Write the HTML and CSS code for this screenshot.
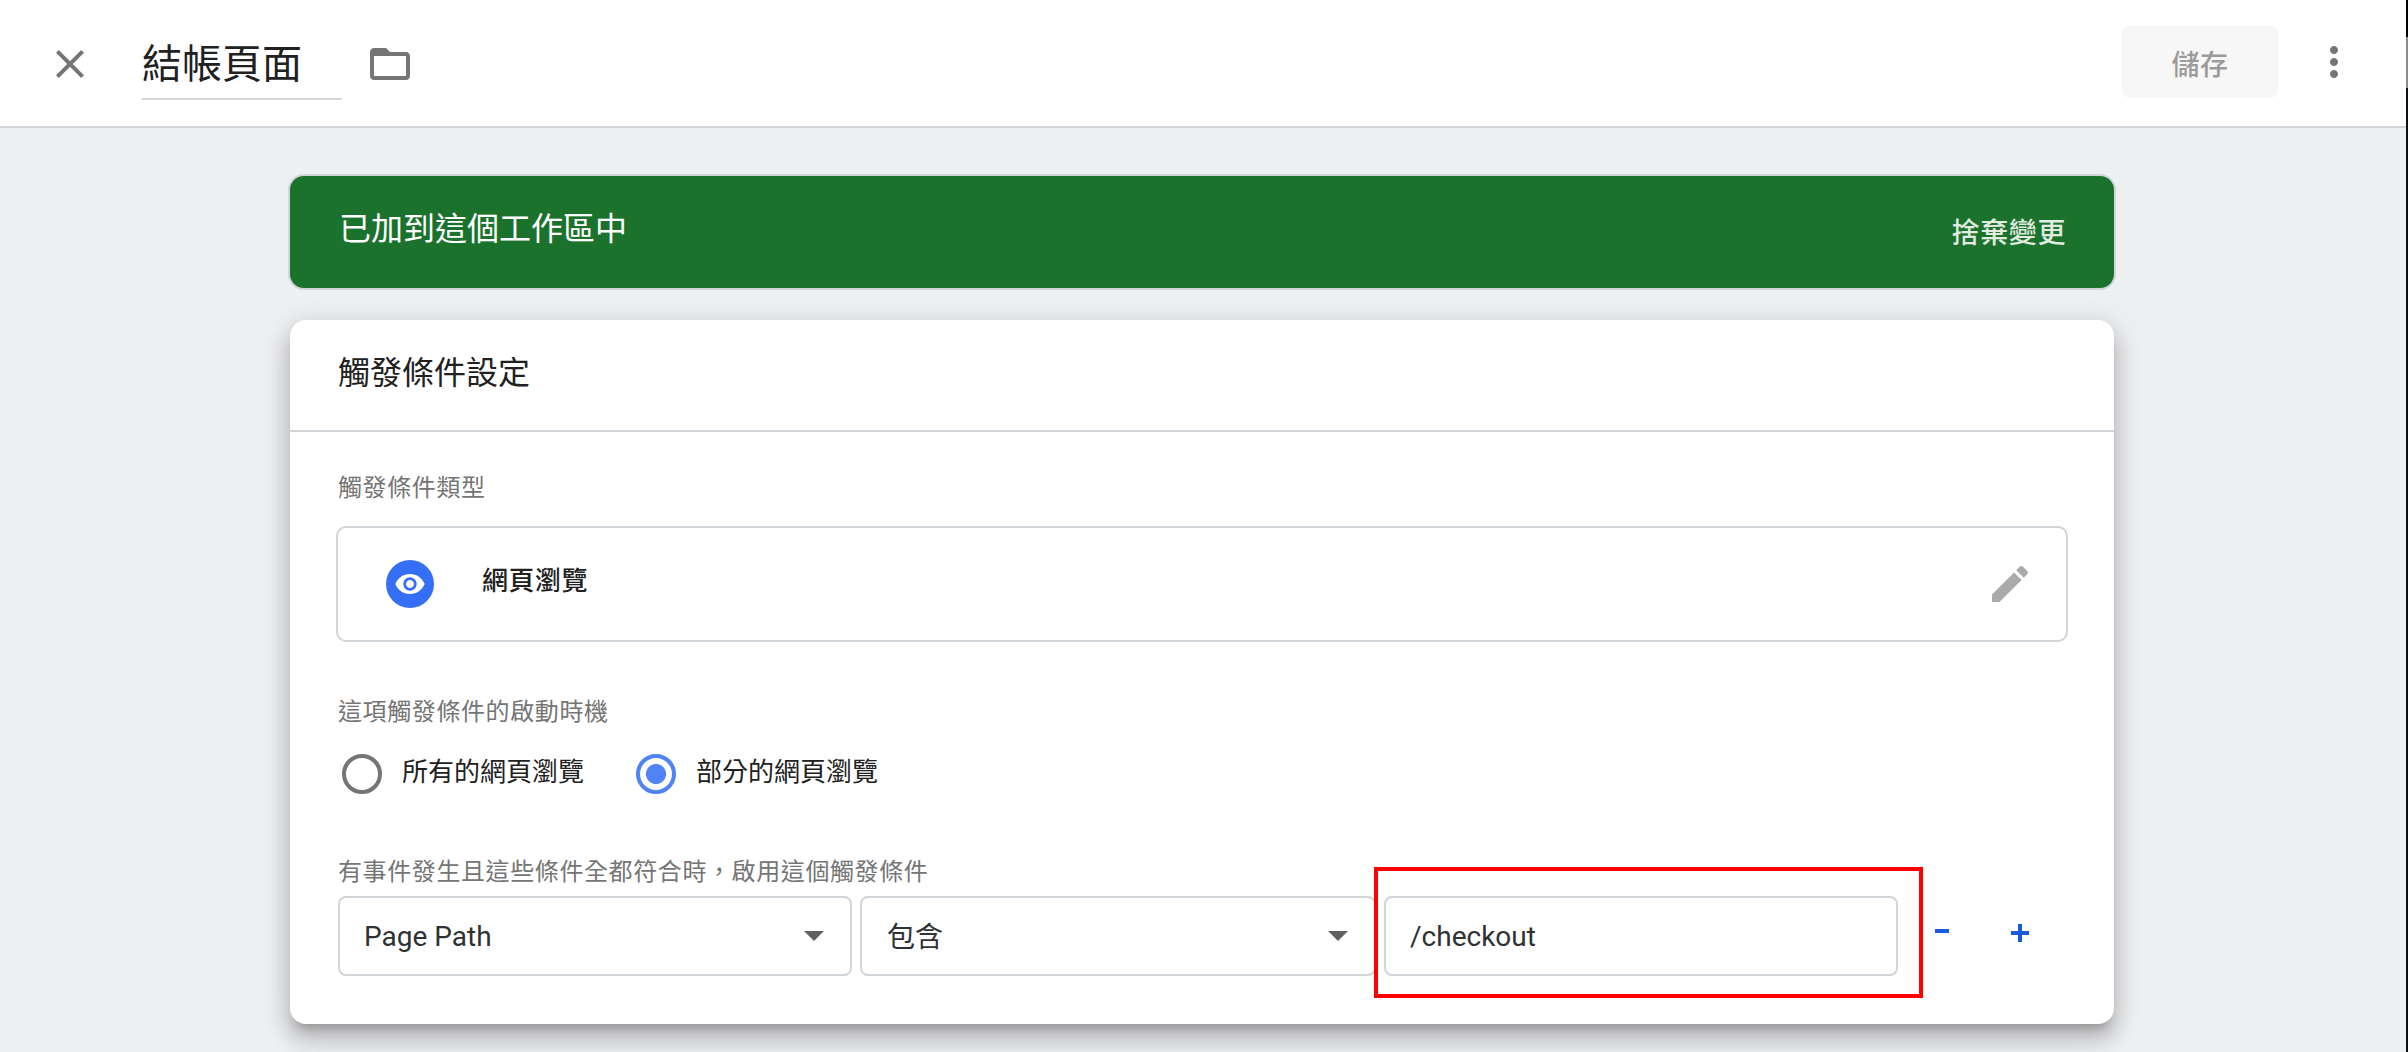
FILE: index.html
```html
<!DOCTYPE html>
<html lang="zh-Hant">
<head>
<meta charset="utf-8">
<title>結帳頁面</title>
<link rel="stylesheet" href="styles.css">
</head>
<body>
<div class="screen">
  <div class="sheet">
    <header class="topbar">
      <svg class="icon" viewBox="0 0 24 24"><path d="M19 6.41 17.59 5 12 10.59 6.41 5 5 6.41 10.59 12 5 17.59 6.41 19 12 13.41 17.59 19 19 17.59 13.41 12z"/></svg>
      <div class="name-field"><span class="name">結帳頁面</span></div>
      <svg class="icon folder" viewBox="0 0 24 24"><path d="M20 6h-8l-2-2H4c-1.1 0-1.99.9-1.99 2L2 18c0 1.1.9 2 2 2h16c1.1 0 2-.9 2-2V8c0-1.1-.9-2-2-2zm0 12H4V8h16v10z"/></svg>
      <button class="save"><span>儲存</span></button>
      <svg class="icon more" viewBox="0 0 24 24"><path d="M12 8c1.1 0 2-.9 2-2s-.9-2-2-2-2 .9-2 2 .9 2 2 2zm0 2c-1.1 0-2 .9-2 2s.9 2 2 2 2-.9 2-2-.9-2-2-2zm0 6c-1.1 0-2 .9-2 2s.9 2 2 2 2-.9 2-2-.9-2-2-2z"/></svg>
    </header>
    <main class="content">
      <section class="banner">
        <span class="banner-title">已加到這個工作區中</span>
        <span class="discard">捨棄變更</span>
      </section>
      <section class="card">
        <h2 class="card-title">觸發條件設定</h2>
        <div class="card-body">
          <div class="label">觸發條件類型</div>
          <div class="type-box">
            <span class="type-icon"><svg viewBox="0 0 24 24"><path d="M12 4.5C7 4.5 2.73 7.61 1 12c1.73 4.39 6 7.5 11 7.5s9.27-3.11 11-7.5c-1.73-4.39-6-7.5-11-7.5zM12 17c-2.76 0-5-2.24-5-5s2.24-5 5-5 5 2.24 5 5-2.24 5-5 5zm0-8c-1.66 0-3 1.34-3 3s1.34 3 3 3 3-1.34 3-3-1.34-3-3-3z"/></svg></span>
            <span class="type-name">網頁瀏覽</span>
            <svg class="icon pencil" viewBox="0 0 24 24"><path d="M3 17.25V21h3.75L17.81 9.94l-3.75-3.75L3 17.25zM20.71 7.04c.39-.39.39-1.02 0-1.41l-2.34-2.34c-.39-.39-1.02-.39-1.41 0l-1.83 1.83 3.75 3.75 1.83-1.83z"/></svg>
          </div>
          <div class="label label-when">這項觸發條件的啟動時機</div>
          <div class="radios">
            <span class="radio"></span><span class="radio-text">所有的網頁瀏覽</span>
            <span class="radio radio-on"></span><span class="radio-text">部分的網頁瀏覽</span>
          </div>
          <div class="label label-cond">有事件發生且這些條件全都符合時，啟用這個觸發條件</div>
          <div class="condition">
            <div class="field"><span>Page Path</span><i class="caret"></i></div>
            <div class="field field-operator"><span class="operator">包含</span><i class="caret"></i></div>
            <div class="field"><span>/checkout</span><div class="highlight"></div></div>
            <svg class="minus" viewBox="0 0 14 4"><path d="M0 0h14v4H0z"/></svg>
            <svg class="plus" viewBox="0 0 18 18"><path d="M7 0h4v7h7v4h-7v7H7v-7H0V7h7z"/></svg>
          </div>
        </div>
      </section>
    </main>
  </div>
  <div class="edge"><span class="edge-top"></span><span class="edge-thumb"></span></div>
</div>
</body>
</html>
```
FILE: styles.css
```css
* { box-sizing: border-box; }
body {
  margin: 0;
  overflow: hidden;
  font-family: Roboto, "Noto Sans CJK TC", sans-serif;
  color: #212121;
}
.screen { display: flex; width: 2408px; height: 1052px; overflow: hidden; }
.sheet { flex: 1; height: 1052px; background: #eeeff1; overflow: hidden; }
.icon { display: block; flex: none; width: 48px; height: 48px; fill: #757575; }

.topbar {
  display: flex;
  align-items: flex-start;
  height: 128px;
  padding: 26px 48px 0 46px;
  background: #fff;
  border-bottom: 2px solid #d0d5da;
}
.topbar .icon { margin-top: 14px; }
.name-field {
  width: 200px;
  height: 74px;
  margin-left: 48px;
  padding-top: 9px;
  border-bottom: 2px solid #d0d5da;
  font-size: 40px;
  line-height: 60px;
}
.topbar .folder { margin-left: 24px; }
.save {
  width: 156px;
  height: 72px;
  margin-left: auto;
  padding: 3px 0 0;
  border: 0;
  border-radius: 8px;
  background: #f7f7f7;
  color: #9b9b9b;
  font: 500 28px/69px Roboto, "Noto Sans CJK TC", sans-serif;
  letter-spacing: .5px;
}
.save span { display: block; padding-top: 2px; }
.topbar .more { margin: 12px 0 0 32px; }

.content { padding: 48px 292px 0 290px; }
.banner {
  display: flex;
  justify-content: space-between;
  height: 112px;
  padding: 0 48px;
  border-radius: 14px;
  background: #1b722c;
  box-shadow: 0 0 0 2px #d0d5da;
  color: #fff;
  font-size: 32px;
  line-height: 106px;
}
.banner-title { padding-left: 1px; }
.discard {
  color: #e1ebe2;
  font-size: 28px;
  font-weight: 500;
  line-height: 115px;
  letter-spacing: .6px;
}
.card {
  height: 704px;
  margin-top: 32px;
  border-radius: 16px;
  background: #fff;
  box-shadow: 0 10px 10px -6px rgba(0,0,0,.2), 0 16px 20px 2px rgba(0,0,0,.14), 0 6px 28px 4px rgba(0,0,0,.12);
}
.card-title {
  height: 112px;
  margin: 0;
  padding-left: 48px;
  border-bottom: 2px solid #d0d5da;
  font-size: 32px;
  font-weight: 400;
  line-height: 106px;
}
.card-body { padding: 38px 46px 0; }
.label {
  height: 36px;
  padding-left: 2px;
  color: #757575;
  font-size: 24px;
  line-height: 36px;
  letter-spacing: .6px;
}
.type-box {
  display: flex;
  align-items: center;
  height: 116px;
  margin-top: 20px;
  padding: 0 32px 0 48px;
  border: 2px solid #d0d5da;
  border-radius: 10px;
}
.type-icon {
  display: flex;
  align-items: center;
  justify-content: center;
  width: 48px;
  height: 48px;
  border-radius: 50%;
  background: #356ff6;
}
.type-icon svg { width: 32px; height: 32px; fill: #fff; }
.type-name {
  margin-left: 48px;
  padding-bottom: 11px;
  font-size: 26px;
  font-weight: 500;
  letter-spacing: .5px;
}
.type-box .pencil { margin-left: auto; fill: #aaa; }
.label-when { margin-top: 52px; }
.radios { display: flex; align-items: center; height: 40px; margin-top: 24px; padding-left: 6px; }
.radio { width: 40px; height: 40px; border: 4px solid #757575; border-radius: 50%; }
.radio-on {
  margin-left: 52px;
  border-color: #4f83f6;
  background: radial-gradient(circle, #4f83f6 9.6px, transparent 10.4px);
}
.radio-text { width: 182px; margin-left: 20px; padding-bottom: 10px; font-size: 26px; white-space: nowrap; }
.label-cond { margin-top: 60px; }
.condition { display: flex; align-items: center; gap: 8px; height: 80px; margin-top: 6px; padding-left: 2px; }
.field {
  position: relative;
  display: flex;
  align-items: center;
  justify-content: space-between;
  width: 514px;
  height: 80px;
  padding: 0 26px 0 24px;
  border: 2px solid #d0d5da;
  border-radius: 8px;
  color: #303134;
  font-size: 28px;
}
.field-operator { width: 516px; padding-left: 25px; }
.operator { padding-bottom: 2px; }
.caret { border: 10px solid transparent; border-top-color: #616161; border-bottom: 0; }
.highlight {
  position: absolute;
  left: -12px;
  top: -31px;
  width: 549px;
  height: 131px;
  border: 4px solid #f00;
}
.minus { width: 14px; height: 4px; margin: 0 0 10px 29px; fill: #185bdf; }
.plus { width: 18px; height: 18px; margin: 0 0 6px 54px; fill: #185bdf; }

.edge { display: flex; flex-direction: column; width: 2px; height: 1052px; background: #0b0f19; }
.edge-top { height: 37px; background: #000; }
.edge-thumb { height: 51px; background: #8c8c8c; }
```
